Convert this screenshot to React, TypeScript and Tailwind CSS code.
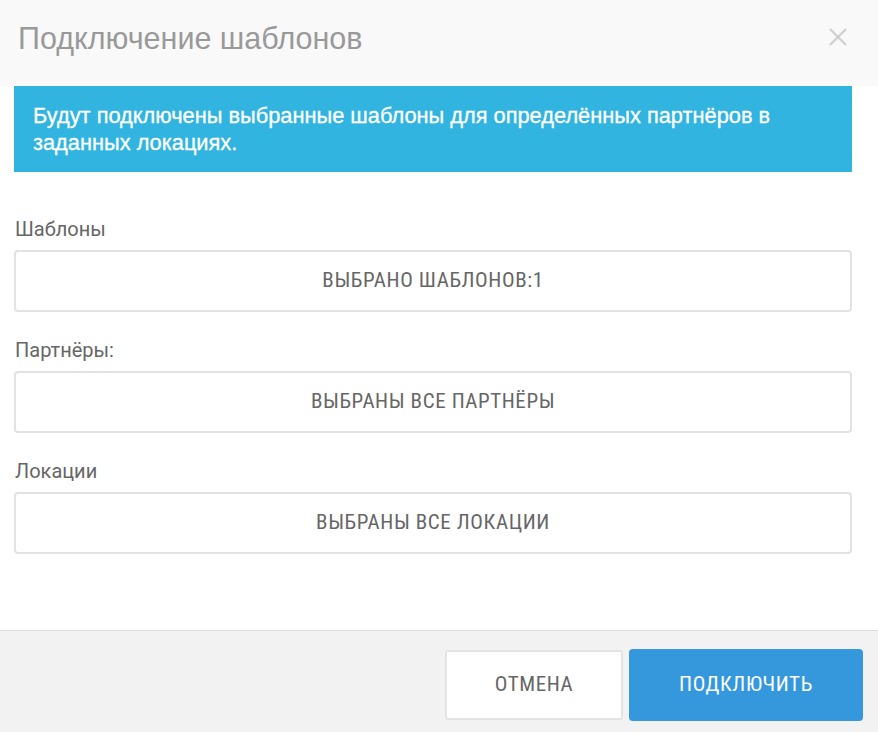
export default function App() {
  const fields = [
    { label: "Шаблоны", value: "ВЫБРАНО ШАБЛОНОВ:1" },
    { label: "Партнёры:", value: "ВЫБРАНЫ ВСЕ ПАРТНЁРЫ" },
    { label: "Локации", value: "ВЫБРАНЫ ВСЕ ЛОКАЦИИ" },
  ];

  return (
    <div className="w-[878px] h-[732px] bg-white flex flex-col font-['Roboto',sans-serif] overflow-hidden">
      {/* header */}
      <div className="h-[86px] shrink-0 bg-[#f9f9f9] flex items-center justify-between pl-[18px] pr-[30px]">
        <h1 className="text-[30.5px] text-[#999] font-['Liberation_Sans',sans-serif] leading-none pb-[10px]">
          Подключение шаблонов
        </h1>
        <svg width="20" height="20" viewBox="0 0 20 20" className="mb-[12px]">
          <path d="M2 2L18 18M18 2L2 18" stroke="#cfcfcf" strokeWidth="2.2" />
        </svg>
      </div>

      {/* body */}
      <div className="flex-1 pl-[14px] pr-[26px]">
        <div className="h-[86px] bg-[#31b4e0] px-[19px] pt-[16px] text-white text-[21.8px] leading-[27px] font-['Liberation_Sans',sans-serif] [-webkit-text-stroke:0.3px_white]">
          Будут подключены выбранные шаблоны для определённых партнёров в заданных локациях.
        </div>

        <div className="pt-[45px] flex flex-col gap-[26px]">
          {fields.map((f) => (
            <div key={f.label} className="flex flex-col gap-[9px]">
              <div className="h-[24px] leading-[24px] text-[20px] text-[#666] pl-[1px]">{f.label}</div>
              <div className="h-[62px] border-2 border-[#e2e2e2] rounded-[4px] flex items-center justify-center">
                <span className="text-[21px] text-[#666] tracking-[0.6px] [font-stretch:condensed]">
                  {f.value}
                </span>
              </div>
            </div>
          ))}
        </div>
      </div>

      {/* footer */}
      <div className="h-[102px] shrink-0 bg-[#f2f2f2] border-t border-[#dedede] flex items-center justify-end gap-[6px] pr-[15px] pt-[6px]">
        <button className="w-[178px] h-[70px] bg-white border-2 border-[#e4e4e4] rounded-[3px] text-[#666] text-[21px] tracking-[0.6px] [font-stretch:condensed]">
          ОТМЕНА
        </button>
        <button className="w-[234px] h-[72px] bg-[#3598dc] rounded-[4px] text-white text-[21px] tracking-[0.6px] [font-stretch:condensed]">
          ПОДКЛЮЧИТЬ
        </button>
      </div>
    </div>
  );
}
